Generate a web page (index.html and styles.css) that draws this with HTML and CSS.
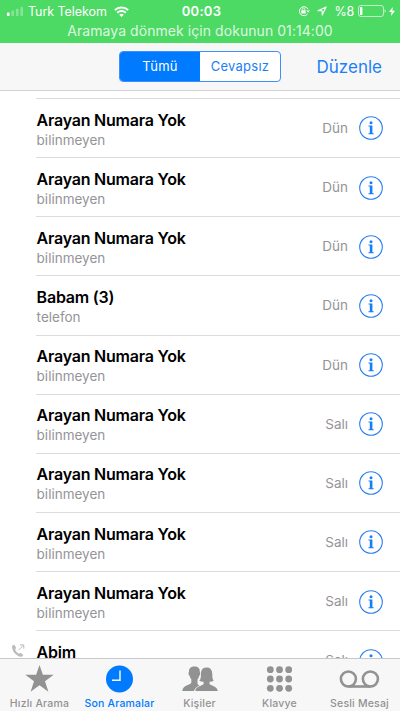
FILE: index.html
```html
<!DOCTYPE html>
<html lang="tr">
<head>
<meta charset="utf-8">
<title>Son Aramalar</title>
<link rel="stylesheet" href="styles.css">
</head>
<body>
<div class="phone">
  <header class="status">
    <div class="status-row">
      <div class="status-left">
        <svg class="signal" width="18" height="9" viewBox="0 0 18 10"><rect x="0" y="6" width="3" height="4" rx=".7" fill="#fff"/><g fill="#fff" opacity=".32"><rect x="5" y="4" width="3" height="6" rx=".7"/><rect x="10" y="2" width="3" height="8" rx=".7"/><rect x="15" y="0" width="3" height="10" rx=".7"/></g></svg>
        <span class="carrier">Turk Telekom</span>
        <svg class="wifi" width="15" height="11" viewBox="0 0 15 11"><g fill="none" stroke="#fff" stroke-width="2"><path d="M.8 4.1a9.6 9.6 0 0 1 13.4 0"/><path d="M3.2 6.8a6.2 6.2 0 0 1 8.6 0"/></g><path d="M5.2 8.7a3.4 3.4 0 0 1 4.6 0L7.5 11z" fill="#fff"/></svg>
      </div>
      <span class="clock">00:03</span>
      <div class="status-right">
        <svg width="12" height="12" viewBox="0 0 12 12"><path d="M9.6 8.8A4.5 4.5 0 1 1 10 4.3" fill="none" stroke="#fff" stroke-width="1"/><path d="M8.3 5.4h3.6L10.2 7.5z" fill="#fff"/><rect x="3.3" y="5.3" width="4.4" height="3.2" rx=".4" fill="#fff"/><path d="M4.2 5.5V4.4a1.3 1.3 0 0 1 2.6 0v1.1" fill="none" stroke="#fff" stroke-width=".8"/></svg>
        <svg class="arrow" width="10" height="10" viewBox="0 0 10 10"><path d="M.9 4.8L9.1.9 5.2 9.1V4.8z" fill="none" stroke="#fff" stroke-width="1.1" stroke-linejoin="round"/></svg>
        <span class="percent">%8</span>
        <svg class="battery" width="28" height="12" viewBox="0 0 28 12"><rect x=".5" y=".5" width="25" height="11" rx="2.5" fill="none" stroke="#fff" opacity=".65"/><rect x="2" y="2" width="2.4" height="8" rx=".8" fill="#fff"/><path d="M26.500 4.200q1.300.6 1.300 1.800t-1.300 1.800z" fill="#fff" opacity=".65"/></svg>
        <svg class="bolt" width="6" height="9" viewBox="0 0 6 9"><path d="M3.8 0L0 5h2.5L2 9l4-5.2H3.4z" fill="#fff"/></svg>
      </div>
    </div>
    <div class="return-call">Aramaya dönmek için dokunun 01:14:00</div>
  </header>
  <nav class="navbar">
    <div class="segments"><span class="segment selected">Tümü</span><span class="segment">Cevapsız</span></div>
    <span class="edit">Düzenle</span>
  </nav>
  <main class="list" id="list"></main>
  <footer class="tabs">
    <div class="tab"><svg width="30" height="29" viewBox="0 0 30 29"><path d="M14.500 0l3.400 9.800h10.800l-8.700 6.400 3.400 10.500-8.900-6.400-8.900 6.400L9 16.200.300 9.800h10.800z" fill="#929292"/></svg><span class="tab-label">Hızlı Arama</span></div>
    <div class="tab active"><svg width="28" height="29" viewBox="0 0 28 29"><circle cx="13.500" cy="14" r="13.500" fill="#007aff"/><path d="M14 5.500v9.700H6" fill="none" stroke="#fff" stroke-width="1.400"/></svg><span class="tab-label">Son Aramalar</span></div>
    <div class="tab"><svg width="36" height="29" viewBox="0 0 36 29"><g fill="#929292"><path d="M12.200 1.500c-3.500 0-5.500 2.200-5.200 5.400-.9.500-.6 3 .6 3.800.3 1.700 1 2.700 1.700 3.500v3.600c-.7 2.200-8.500 2.300-9.100 8.200h11.600c1.200-3.300 5.500-3.800 6.100-5.300-1.700-.5-2.200-1.300-2.400-2.700v-3.700c.8-.9 1.500-2 1.700-3.600 1.200-.8 1.400-3.200.6-3.800.3-3.400-1.700-5.400-5.600-5.400z"/><path d="M24.800 2.500c-4.700-.2-6 3.300-5.900 7.200.1 3-.5 4.700-1.600 6 1.300.8 2.800 1 4.300 1v2.100c-.7 2.200-7.800 2-8.300 7.200h22.500c-.6-5.300-7.500-5-8.300-7.200v-2.100c1.600 0 3.200-.3 4.200-1-1.300-1.500-1.400-3.600-1.400-6.200 0-4.300-1.700-7-5.500-7z" stroke="#f7f7f7" stroke-width="1.400" paint-order="stroke"/></g></svg><span class="tab-label">Kişiler</span></div>
    <div class="tab"><svg width="28" height="29" viewBox="0 0 28 29"><g fill="#929292"><circle cx="4.300" cy="4.700" r="3.400"/><circle cx="13.500" cy="4.700" r="3.400"/><circle cx="22.700" cy="4.700" r="3.400"/><circle cx="4.300" cy="14" r="3.400"/><circle cx="13.500" cy="14" r="3.400"/><circle cx="22.700" cy="14" r="3.400"/><circle cx="4.300" cy="23.300" r="3.400"/><circle cx="13.500" cy="23.300" r="3.400"/><circle cx="22.700" cy="23.300" r="3.400"/></g></svg><span class="tab-label">Klavye</span></div>
    <div class="tab"><svg width="42" height="29" viewBox="0 0 42 29"><g fill="none" stroke="#929292" stroke-width="2.600"><circle cx="9.400" cy="14" r="7.500"/><circle cx="31.400" cy="14" r="7.500"/><path d="M9.400 21.500h22"/></g></svg><span class="tab-label">Sesli Mesaj</span></div>
  </footer>
</div>
<script src="calls.js"></script>
</body>
</html>
```

FILE: styles.css
```css
* { box-sizing: border-box; }
body { margin: 0; background: #fff; font-family: Inter, "Liberation Sans", sans-serif; }
svg { display: block; flex: none; }
span { white-space: nowrap; }
.phone { width: 400px; height: 711px; display: flex; flex-direction: column; overflow: hidden; }
.status { flex: none; height: 43px; background: #4cd964; color: #fff; }
.status-row { height: 22px; display: grid; grid-template-columns: 1fr auto 1fr; align-items: center; padding: 0 5px 0 6px; }
.status-left, .status-right { display: flex; align-items: center; }
.status-right { justify-content: flex-end; }
.carrier { font-size: 12.5px; letter-spacing: -.05px; margin-left: 4px; }
.wifi { margin-left: 7px; }
.clock { font-size: 13px; font-weight: 600; letter-spacing: .3px; margin-left: 2px; }
.arrow { margin-left: 7px; }
.percent { font-size: 12.5px; letter-spacing: -.2px; margin-left: 7px; }
.battery { margin-left: 4px; }
.bolt { margin-left: 3px; }
.return-call { text-align: center; font-size: 14px; line-height: 18px; letter-spacing: .06px; opacity: .8; }
.navbar { flex: none; height: 48px; background: #f7f7f7; border-bottom: 1px solid #d4d4d6; display: grid; grid-template-columns: 1fr 162px 1fr; align-items: center; }
.segments { grid-column: 2; height: 31px; display: flex; border: 1px solid #3b91f7; border-radius: 4px; overflow: hidden; background: #fff; }
.segment { flex: 1; color: #1c7ff5; font-size: 13px; line-height: 29px; text-align: center; letter-spacing: .25px; }
.segment.selected { background: #007aff; color: #fff; }
.edit { justify-self: end; margin-right: 18px; color: #1c7ff5; font-size: 17px; line-height: 22px; }
.list { flex: 1; min-height: 0; overflow: hidden; padding-top: 7px; }
.call { height: 59.15px; display: flex; }
.gutter { width: 36px; flex: none; padding: 14px 0 0 11px; }
.call-body { flex: 1; border-top: 1px solid #dcdce0; display: flex; padding: 10.6px 17px 0 .6px; }
.person { flex: 1; }
.name { display: block; font-size: 16px; line-height: 21px; font-weight: 600; letter-spacing: -.22px; color: #000; }
.kind { display: block; font-size: 13.5px; line-height: 19px; color: #949498; }
.day { margin: 8.4px 11px 0 0; font-size: 13.5px; line-height: 20px; color: #949498; }
.info { margin-top: 6.8px; }
.tabs { flex: none; height: 53px; background: #f7f7f7; border-top: 1px solid #c8c8ca; display: grid; grid-template-columns: repeat(5, 80px); }
.tab { display: flex; flex-direction: column; align-items: center; padding-top: 6px; color: #929292; }
.tab.active { color: #007aff; }
.tab-label { margin: 3px 1px 0 0; font-size: 10.5px; line-height: 14px; font-weight: 500; letter-spacing: .2px; }
```

FILE: calls.js
```js
const names = ["Arayan Numara Yok", "Arayan Numara Yok", "Arayan Numara Yok", "Babam (3)", "Arayan Numara Yok", "Arayan Numara Yok", "Arayan Numara Yok", "Arayan Numara Yok", "Arayan Numara Yok", "Abim"];
const outgoing = '<svg width="14" height="14" viewBox="0 0 14 14"><path d="M1.200 1.500C0 6 5.500 13.500 11 12.700l1.300-1.700-2.800-2.300-1.700 1.100C6 8.800 4.600 7 4 5.600l1.300-1.500L3.400.8z" fill="#bcbcc0"/><path d="M7.500 6.200L12.700 1M9 .9h3.800v3.800" fill="none" stroke="#bcbcc0"/></svg>';
const info = '<svg class="info" width="24" height="24" viewBox="0 0 24 24"><circle cx="12" cy="12" r="11.300" fill="none" stroke="#2b7ff0" stroke-width="1.100"/><circle cx="12" cy="6.700" r="1.500" fill="#147efb"/><path d="M9.500 9.600h3.900v7.600h1.300v1H9.500v-1h1.300v-6.600H9.500z" fill="#147efb"/></svg>';
const kindOf = { "Babam (3)": "telefon", "Abim": "" };
document.getElementById("list").innerHTML = names.map((name, i) => `
  <div class="call">
    <div class="gutter">${name === "Abim" ? outgoing : ""}</div>
    <div class="call-body">
      <div class="person"><span class="name">${name}</span><span class="kind">${kindOf[name] ?? "bilinmeyen"}</span></div>
      <span class="day">${i < 5 ? "Dün" : "Salı"}</span>${info}
    </div>
  </div>`).join("");
```
